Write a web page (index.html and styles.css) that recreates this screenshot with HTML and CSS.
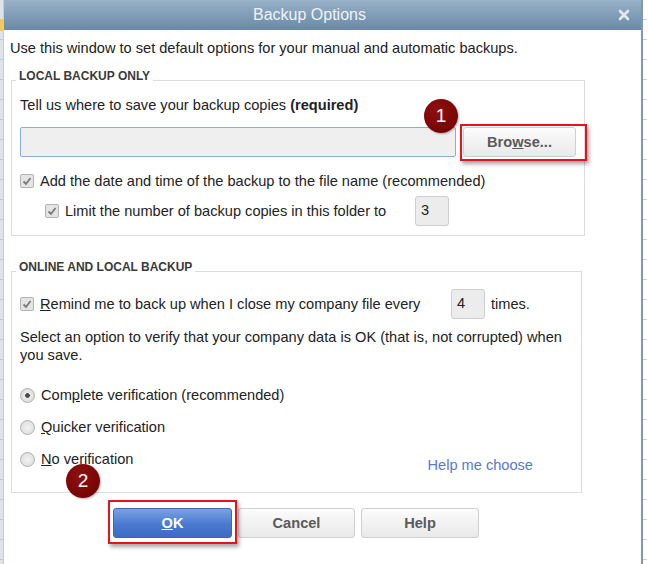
FILE: index.html
```html
<!DOCTYPE html>
<html lang="en">

<head>
    <meta charset="UTF-8">
    <title>Backup Options</title>
    <link rel="stylesheet" href="styles.css">
</head>

<body>
    <div class="desk">
        <div class="sheet sheet-left"></div>

        <div class="dialog">
            <div class="titlebar">
                <span class="title">Backup Options</span>
                <svg class="close" width="12" height="12" viewBox="0 0 12 12">
                    <path d="M2 2 L10 10 M10 2 L2 10" stroke="#e2e9f0" stroke-width="2.6" stroke-linecap="round" />
                </svg>
            </div>

            <div class="content">
                <p class="intro">Use this window to set default options for your manual and automatic backups.</p>

                <fieldset class="group group-local">
                    <legend>LOCAL BACKUP ONLY</legend>

                    <p class="line">Tell us where to save your backup copies <strong>(required)</strong></p>

                    <div class="path-row">
                        <input type="text" class="path-input">
                        <button class="btn">Bro<u>w</u>se...</button>
                        <span class="callout callout-browse"></span>
                        <span class="badge badge-one">1</span>
                    </div>

                    <label class="check-row date-row">
                        <span class="check"></span>
                        <span>Add the date and time of the backup to the file name (recommended)</span>
                    </label>

                    <label class="check-row limit-row">
                        <span class="check"></span>
                        <span class="limit-text">Limit the number of backup copies in this folder to</span>
                        <span class="num">3</span>
                    </label>
                </fieldset>

                <fieldset class="group group-online">
                    <legend>ONLINE AND LOCAL BACKUP</legend>

                    <label class="check-row remind-row">
                        <span class="check"></span>
                        <span class="remind-text"><u>R</u>emind me to back up when I close my company file every</span>
                        <span class="num">4</span>
                        <span>times.</span>
                    </label>

                    <p class="verify">Select an option to verify that your company data is OK (that is, not corrupted) when you save.</p>

                    <label class="radio-row first">
                        <span class="radio on"></span>
                        <span>Com<u>p</u>lete verification (recommended)</span>
                    </label>
                    <label class="radio-row">
                        <span class="radio"></span>
                        <span><u>Q</u>uicker verification</span>
                    </label>
                    <div class="last-row">
                        <label class="radio-row">
                            <span class="radio"></span>
                            <span><u>N</u>o verification</span>
                        </label>
                        <a class="help-link">Help me choose</a>
                    </div>
                </fieldset>

                <div class="buttons">
                    <button class="btn btn-primary btn-ok"><u>O</u>K</button>
                    <button class="btn btn-cancel">Cancel</button>
                    <button class="btn btn-help">Help</button>
                    <span class="callout callout-ok"></span>
                    <span class="badge badge-two">2</span>
                </div>
            </div>
        </div>

        <div class="sheet sheet-right"></div>
    </div>
</body>

</html>
```

FILE: styles.css
```css
body {
    margin: 0;
    width: 648px;
    height: 564px;
    overflow: hidden;
    background: #fff;
    font-family: "Liberation Sans", Arial, sans-serif;
    font-size: 14.6px;
    color: #222;
}

p {
    margin: 0;
}

.desk {
    display: flex;
    height: 564px;
}

/* spreadsheet peeking out behind the dialog */
.sheet-left {
    width: 3px;
    border-right: 1px solid #c8ccd4;
    background-color: #dfe2e8;
    background-image:
        linear-gradient(to bottom, transparent 19px, #f3c85e 19px, #f3c85e 31px, transparent 31px),
        repeating-linear-gradient(to bottom, transparent 0, transparent 19px, #c2c6ce 19px, #c2c6ce 20px);
}

.sheet-right {
    width: 4px;
    background-color: #fff;
    background-image: repeating-linear-gradient(to bottom, transparent 0, transparent 19px, #c9ccd2 19px, #c9ccd2 20px);
}

.dialog {
    width: 637px;
    border-right: 2px solid #7f99b3;
    display: flex;
    flex-direction: column;
}

.titlebar {
    height: 30px;
    background: linear-gradient(to bottom, #98b1c8, #6a89a5);
    display: flex;
    align-items: center;
    position: relative;
}

.title {
    flex: 1;
    text-align: center;
    padding-right: 26px;
    color: #eef3f8;
    font-size: 16px;
}

.close {
    position: absolute;
    right: 11px;
    top: 9px;
}

.content {
    padding: 0 6px 0 7px;
}

.intro {
    margin: 9px 0 0 -1px;
    line-height: 18px;
}

.group {
    margin: 0;
    padding: 0 8px;
    width: 553px;
    border: 1px solid #dddddd;
}

.group legend {
    padding: 0 3px 8px;
    margin-left: -4px;
    font-size: 12px;
    font-weight: bold;
    color: #3a3a3a;
    line-height: 14px;
}

.group-local {
    margin-top: 12px;
    padding-bottom: 9px;
}

.group-online {
    margin-top: 24px;
    padding-bottom: 18px;
}

.line {
    margin-top: 5px;
    line-height: 18px;
}

.path-row {
    position: relative;
    display: flex;
    margin-top: 13px;
    height: 30px;
}

.path-input {
    width: 436px;
    height: 30px;
    box-sizing: border-box;
    margin: 0;
    padding: 0;
    border: 1px solid #86aee0;
    border-radius: 2px;
    background: #efefef;
}

.btn {
    font-family: inherit;
    font-size: 14.6px;
    font-weight: bold;
    color: #5a5a5a;
    height: 30px;
    border: 1px solid #cfcfcf;
    border-radius: 3px;
    background: linear-gradient(to bottom, #fcfcfc, #e9e9e9);
    padding: 0;
}

.path-row .btn {
    width: 113px;
    margin-left: 7px;
}

.callout {
    position: absolute;
    border: 2px solid #e3141b;
    box-shadow: 2px 3px 4px rgba(0, 0, 0, 0.35);
}

.callout-browse {
    left: 440px;
    top: -3px;
    width: 123px;
    height: 33px;
}

.badge {
    position: absolute;
    width: 34px;
    height: 34px;
    border-radius: 50%;
    background: radial-gradient(circle at 40% 35%, #8f1010, #6e0000);
    box-shadow: 1px 1px 2px rgba(0, 0, 0, 0.3);
    color: #fff;
    font-size: 19px;
    line-height: 34px;
    text-align: center;
}

.badge-one {
    left: 404px;
    top: -28px;
}

.check-row {
    display: flex;
    align-items: center;
    gap: 6px;
    line-height: 18px;
}

.date-row {
    margin-top: 15px;
}

.limit-row {
    margin-top: 6px;
    padding-left: 25px;
    height: 30px;
}

.check {
    width: 12px;
    height: 12px;
    border: 1px solid #b4b4b4;
    border-radius: 2px;
    background: #e4e4e4 url("data:image/svg+xml;utf8,<svg xmlns='http://www.w3.org/2000/svg' width='12' height='12'><path d='M2.5 6.5 L5 9 L9.5 3' fill='none' stroke='%23787878' stroke-width='1.8'/></svg>") center no-repeat;
    flex: none;
}

.limit-text {
    width: 344px;
}

.num {
    width: 34px;
    height: 30px;
    border: 1px solid #cfcfcf;
    border-radius: 3px;
    background: #ececec;
    padding: 0 0 0 5px;
    box-sizing: border-box;
    line-height: 26px;
    flex: none;
}

.remind-row {
    margin-top: 7px;
    height: 30px;
}

.remind-text {
    width: 405px;
}

.verify {
    margin-top: 9px;
    line-height: 18px;
    max-width: 545px;
}

.radio-row {
    display: flex;
    align-items: center;
    gap: 6px;
    line-height: 18px;
    margin-top: 14px;
}

.radio-row.first {
    margin-top: 22px;
}

.radio {
    width: 13px;
    height: 13px;
    border: 1px solid #b0b0b0;
    border-radius: 50%;
    background: radial-gradient(circle, #f2f2f2, #d9d9d9);
    flex: none;
}

.radio.on {
    background: radial-gradient(circle, #4a4a4a 0, #4a4a4a 2px, #eaeaea 2.6px, #d6d6d6 100%);
}

.last-row {
    display: flex;
    justify-content: space-between;
    align-items: flex-start;
}

.help-link {
    color: #5878d6;
    line-height: 18px;
    margin-top: 20px;
    margin-right: 40px;
}

.buttons {
    position: relative;
    display: flex;
    gap: 6px;
    margin-top: 15px;
    padding-left: 102px;
}

.btn-ok {
    width: 119px;
}

.btn-cancel {
    width: 117px;
}

.btn-help {
    width: 118px;
}

.btn-primary {
    color: #fff;
    border: 1px solid #3e67b0;
    background: linear-gradient(to bottom, #7aa3e3, #4a79cf 55%, #3c6bc3);
}

.callout-ok {
    left: 97px;
    top: -8px;
    width: 125px;
    height: 40px;
}

.badge-two {
    left: 55px;
    top: -44px;
}
```
